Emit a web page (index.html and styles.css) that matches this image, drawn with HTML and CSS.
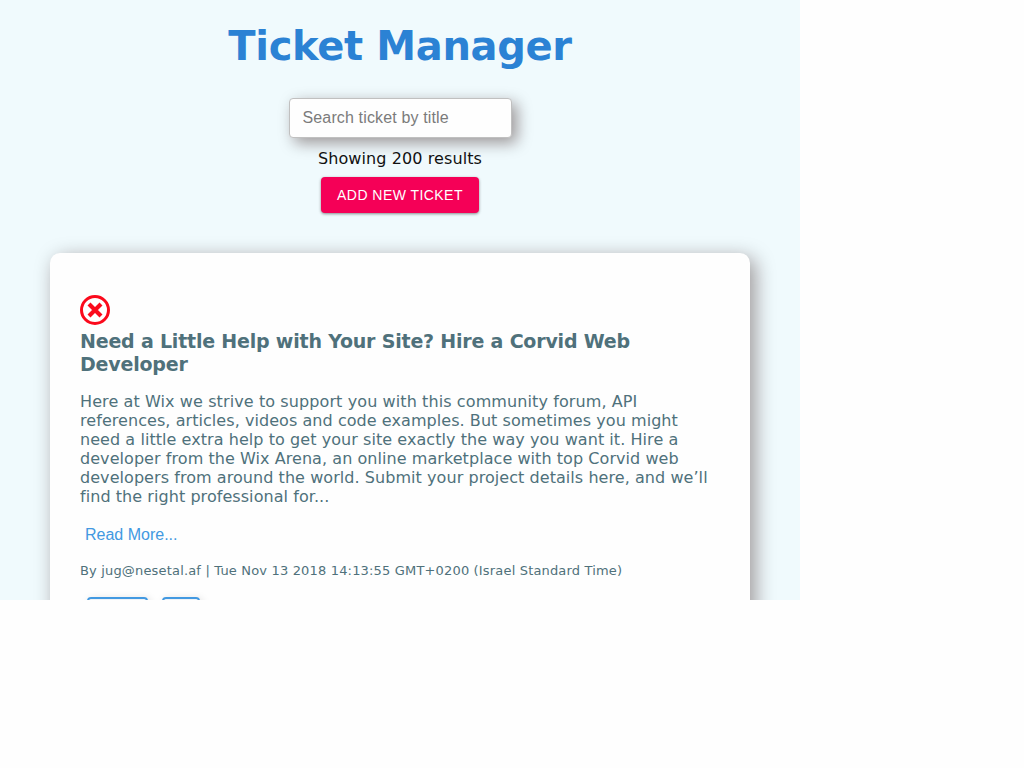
FILE: index.html
```html
<!DOCTYPE html>
<html lang="en">
<head>
<meta charset="utf-8">
<title>Ticket Manager</title>
<link rel="stylesheet" href="styles.css">
</head>
<body>
<main class="app">
  <h1 class="app-title">Ticket Manager</h1>
  <input class="search" type="text" placeholder="Search ticket by title">
  <div class="results">Showing 200 results</div>
  <button class="add-button">ADD NEW TICKET</button>
  <article class="ticket">
    <svg class="hide-icon" viewBox="0 0 30 30" width="30" height="30" aria-hidden="true">
      <circle cx="15" cy="15" r="13.5" fill="#fff" stroke="#fb0a1c" stroke-width="3"/>
      <path d="M9 9L21 21M21 9L9 21" stroke="#fb0a1c" stroke-width="4.2"/>
    </svg>
    <h2 class="ticket-title">Need a Little Help with Your Site? Hire a Corvid Web<br>Developer</h2>
    <p class="ticket-body"><span class="lead">Here at Wix we strive to support you with this community forum, API</span><br>references, articles, videos and code examples. But sometimes you might<br>need a little extra help to get your site exactly the way you want it. Hire a<br>developer from the Wix Arena, an online marketplace with top Corvid web<br>developers from around the world. Submit your project details here, and we’ll<br>find the right professional for...</p>
    <button class="read-more">Read More...</button>
    <div class="meta">By jug@nesetal.af | Tue Nov 13 2018 14:13:55 GMT+0200 (Israel Standard Time)</div>
    <div class="labels"><span class="label label-wide"></span><span class="label label-narrow"></span></div>
  </article>
</main>
</body>
</html>
```

FILE: styles.css
```css
* { box-sizing: border-box; }
body {
  margin: 0;
  background: #fefefe;
  font-family: Verdana, "DejaVu Sans", sans-serif;
  font-size: 16px;
  line-height: 19px;
}
.app {
  width: 800px;
  height: 600px;
  overflow: hidden;
  background: #f0fafd;
  display: flex;
  flex-direction: column;
  align-items: center;
}
.app-title {
  margin: 22px 0 27px;
  font-size: 40px;
  line-height: 49px;
  letter-spacing: -0.35px;
  color: #2b82d4;
  white-space: nowrap;
}
.search {
  width: 223px;
  height: 40px;
  flex: none;
  padding: 0 13px;
  border: 1px solid #c0c0c0;
  border-radius: 4px;
  background: #fefefe;
  box-shadow: 5px 5px 15px rgba(30, 0, 0, 0.4);
  font: 16px "Liberation Sans", Arial, sans-serif;
  letter-spacing: 0.14px;
}
.search::placeholder { color: #7b7b7b; }
.results {
  margin: 11px 0 9px;
  letter-spacing: 0.1px;
  color: #111;
}
.add-button {
  width: 158px;
  height: 36px;
  flex: none;
  padding: 0;
  border: 0;
  border-radius: 4px;
  background: #f50057;
  color: #fff;
  font: 14px "Liberation Sans", Arial, sans-serif;
  letter-spacing: 0.45px;
  box-shadow: 0 1px 3px rgba(0, 0, 0, 0.45);
}
.ticket {
  width: 700px;
  height: 500px;
  flex: none;
  margin-top: 40px;
  padding: 42px 30px 0;
  border-radius: 10px;
  background: #fefefe;
  color: #4f717b;
  box-shadow: 5px 5px 20px rgba(30, 0, 0, 0.4);
  white-space: nowrap;
}
.hide-icon { display: block; }
.ticket-title {
  margin: 5px 0 16px;
  font-size: 19px;
  line-height: 23px;
  letter-spacing: -0.2px;
}
.ticket-body {
  margin: 0;
  letter-spacing: 0.06px;
}
.lead { letter-spacing: 0.1px; }
.read-more {
  display: block;
  margin: 19px 0 0 5px;
  padding: 0;
  border: 0;
  background: none;
  color: #4299e1;
  font: 16px/19px "Liberation Sans", Arial, sans-serif;
}
.meta {
  margin-top: 18px;
  font-size: 13px;
  line-height: 18px;
  letter-spacing: 0.17px;
}
.labels {
  display: flex;
  gap: 14px;
  margin: 17px 0 0 7px;
}
.label {
  height: 26px;
  border: 2px solid #4299e1;
  border-radius: 4px;
  background: #edf2f7;
  box-shadow: 2px 2px 8px rgba(0, 0, 0, 0.15);
}
.label-wide { width: 61px; }
.label-narrow { width: 38px; }
```
